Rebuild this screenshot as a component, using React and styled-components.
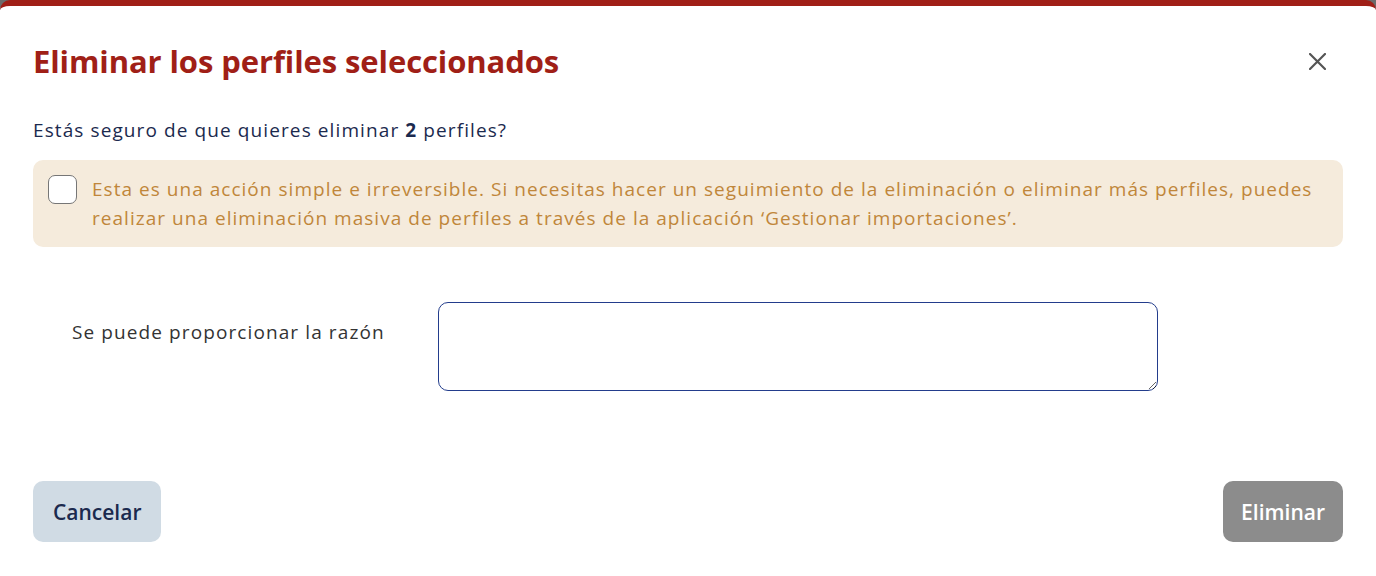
import React from "react";
import styled, { createGlobalStyle } from "styled-components";

const Global = createGlobalStyle`
  html, body { margin: 0; padding: 0; }
  body {
    background: #6b6b6b;
    font-family: "Open Sans", "Noto Sans", sans-serif;
    overflow: hidden;
  }
`;

const Modal = styled.div`
  box-sizing: border-box;
  width: 1376px;
  height: 590px;
  background: #fff;
  border-top: 6px solid #a01f17;
  border-radius: 10px;
  padding: 0 33px;
  display: flex;
  flex-direction: column;
`;

const Header = styled.div`
  display: flex;
  align-items: center;
  justify-content: space-between;
  height: 112px;
  padding-bottom: 2px;
  box-sizing: border-box;
`;

const Title = styled.h2`
  margin: 0;
  font-size: 31px;
  font-weight: 700;
  letter-spacing: -0.1px;
  color: #a01f17;
`;

const CloseButton = styled.button`
  border: 0;
  background: none;
  padding: 0;
  width: 24px;
  height: 24px;
  margin-right: 14px;
  display: flex;
  align-items: center;
  justify-content: center;
  cursor: pointer;
`;

const Question = styled.p`
  margin: 0;
  font-size: 19px;
  letter-spacing: 1.1px;
  line-height: 24px;
  color: #1b2a4e;
  padding-bottom: 18px;
  b { font-weight: 700; }
`;

const Alert = styled.div`
  display: flex;
  gap: 15px;
  align-items: flex-start;
  background: #f5ebdc;
  border-radius: 10px;
  padding: 15px 15px 14px 15px;
`;

const Check = styled.span`
  flex: none;
  box-sizing: border-box;
  width: 29px;
  height: 29px;
  background: #fff;
  border: 1.5px solid #767676;
  border-radius: 7px;
`;

const AlertText = styled.p`
  margin: 0;
  font-size: 19px;
  letter-spacing: 1.03px;
  line-height: 29px;
  color: #c0863a;
`;

const FormRow = styled.div`
  display: flex;
  align-items: flex-start;
  margin-top: 55px;
`;

const Label = styled.label`
  box-sizing: border-box;
  width: 405px;
  padding-left: 39px;
  padding-top: 18px;
  font-size: 19px;
  letter-spacing: 1.1px;
  line-height: 24px;
  color: #333;
`;

const TextArea = styled.textarea`
  box-sizing: border-box;
  width: 720px;
  height: 89px;
  border: 1px solid #233d8c;
  border-radius: 10px;
  font-family: inherit;
  font-size: 16px;
  padding: 10px;
  outline: none;
`;

const Footer = styled.div`
  display: flex;
  justify-content: space-between;
  margin-top: 90px;
`;

const Button = styled.button`
  height: 61px;
  padding: 0 ${(p) => (p.$variant === "danger" ? 18 : 20)}px;
  border: 0;
  border-radius: 10px;
  font-family: inherit;
  font-size: 21px;
  font-weight: 600;
  background: ${(p) => (p.$variant === "danger" ? "#8c8c8c" : "#d0dbe4")};
  color: ${(p) => (p.$variant === "danger" ? "#fff" : "#1b2a4e")};
`;

export default function App() {
  return (
    <>
      <Global />
      <Modal>
        <Header>
          <Title>Eliminar los perfiles seleccionados</Title>
          <CloseButton aria-label="Cerrar">
            <svg width="17" height="17" viewBox="0 0 17 17">
              <path d="M1 1 L16 16 M16 1 L1 16" stroke="#555" strokeWidth="2.2" strokeLinecap="round" />
            </svg>
          </CloseButton>
        </Header>
        <Question>
          Estás seguro de que quieres eliminar <b>2</b> perfiles?
        </Question>
        <Alert>
          <Check />
          <AlertText>
            Esta es una acción simple e irreversible. Si necesitas hacer un seguimiento de la eliminación o eliminar más perfiles, puedes realizar una eliminación masiva de perfiles a través de la aplicación ‘Gestionar importaciones’.
          </AlertText>
        </Alert>
        <FormRow>
          <Label>Se puede proporcionar la razón</Label>
          <TextArea />
        </FormRow>
        <Footer>
          <Button>Cancelar</Button>
          <Button $variant="danger">Eliminar</Button>
        </Footer>
      </Modal>
    </>
  );
}
